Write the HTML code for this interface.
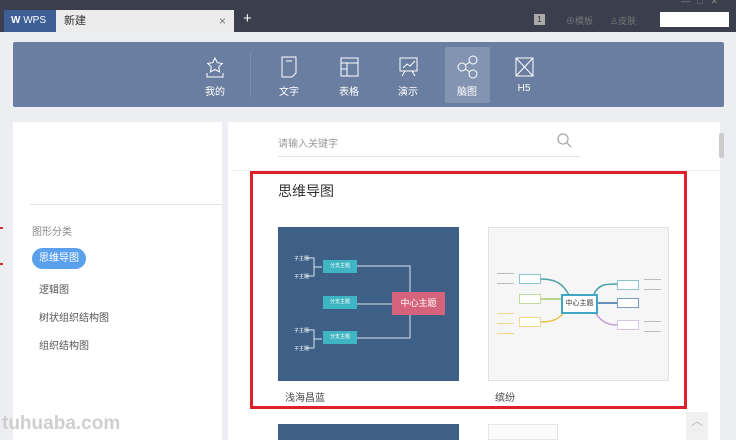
<!DOCTYPE html>
<html><head><meta charset="utf-8"><style>
*{margin:0;padding:0;box-sizing:border-box}
html,body{width:736px;height:440px;overflow:hidden}
body{background:#eceef1;font-family:"Liberation Sans","Noto Sans CJK SC",sans-serif;position:relative}
.abs{position:absolute}
.title{left:0;top:0;width:736px;height:32px;background:#3a3e4d}
.tab1{left:4px;top:10px;width:52px;height:22px;background:#3d5f96;color:#fff;font-size:10px;line-height:22px;padding-left:7px}
.tab2{left:56px;top:10px;width:178px;height:22px;background:#ececec;color:#333;font-size:11px;line-height:22px;padding-left:8px}
.banner{left:13px;top:42px;width:711px;height:65px;background:#6a7ea1;border-radius:2px}
.it{position:absolute;top:0;width:44px;height:65px;color:#fff;font-size:10px;text-align:center}
.it svg{position:absolute;left:12px;top:13px}
.it span{position:absolute;left:0;right:0;top:41px}
.panel{background:#fff}
.pill{left:32px;top:248px;width:54px;height:21px;background:#5aa0ec;border-radius:11px;color:#fff;font-size:10px;line-height:21px;text-align:center}
.cat{left:39px;font-size:10px;color:#555}
.red{left:250px;top:171px;width:437px;height:238px;border:3px solid #e0202a}
.box{position:absolute;font-size:5px;color:#fff;text-align:center}
.b{position:absolute;background:#fff;height:10px;width:22px;border:1px solid}
.s{position:absolute;height:8px;width:17px;border-bottom:1px solid}
</style></head><body>
<div class="abs title"></div>
<div class="abs tab1"><b style="font-size:10px">W</b> WPS</div>
<div class="abs tab2">新建<span style="position:absolute;right:8px;color:#777;font-size:12px">×</span></div>
<div class="abs" style="left:243px;top:10px;color:#fff;font-size:15px">+</div>
<div class="abs" style="left:534px;top:14px;width:11px;height:11px;background:#aaa;color:#333;font-size:8px;text-align:center;line-height:11px">1</div>
<div class="abs" style="left:566px;top:14px;color:#777;font-size:9px">⊕模板</div>
<div class="abs" style="left:610px;top:14px;color:#777;font-size:9px">♙皮肤</div>
<div class="abs" style="left:660px;top:12px;width:69px;height:15px;background:#fff"></div>
<div class="abs" style="left:681px;top:-4px;color:#888;font-size:9px">—&nbsp;&nbsp;&nbsp;□&nbsp;&nbsp;&nbsp;✕</div>

<div class="abs banner">
 <div class="it" style="left:180px"><svg width="20" height="24" viewBox="0 0 20 24" fill="none" stroke="#fff" stroke-width="1"><path d="M10 3l2.3 4.7 5 .7-3.6 3.5.9 5-4.6-2.4-4.6 2.4.9-5L2.7 8.4l5-.7z"/><path d="M2 18v4h16v-4"/></svg><span>我的</span></div>
 <div style="position:absolute;left:237px;top:10px;width:1px;height:45px;background:#7d8fae"></div>
 <div class="it" style="left:254px"><svg width="20" height="24" viewBox="0 0 20 24" fill="none" stroke="#fff"><path d="M3 2h14v16l-4 4H3z M7 6h6"/></svg><span>文字</span></div>
 <div class="it" style="left:314px"><svg width="20" height="24" viewBox="0 0 20 24" fill="none" stroke="#fff"><rect x="2" y="3" width="17" height="18"/><path d="M2 8h17M8 8v13M2 14h6"/></svg><span>表格</span></div>
 <div class="it" style="left:373px"><svg width="20" height="24" viewBox="0 0 20 24" fill="none" stroke="#fff"><path d="M2 3h17v13H2zM5 13l4-4 3 2 5-5M7 16l-3 5M14 16l3 5"/></svg><span>演示</span></div>
 <div style="position:absolute;left:432px;top:5px;width:45px;height:56px;background:#8294b2;border-radius:2px"></div>
 <div class="it" style="left:432px"><svg width="22" height="24" viewBox="0 0 22 24" fill="none" stroke="#fff"><circle cx="5" cy="12" r="4"/><circle cx="16" cy="5" r="4"/><circle cx="16" cy="19" r="4"/><path d="M8 10l5-3M8 14l5 3"/></svg><span>脑图</span></div>
 <div class="it" style="left:489px"><svg width="20" height="24" viewBox="0 0 20 24" fill="none" stroke="#fff"><rect x="2" y="3" width="17" height="18"/><path d="M2 3l17 18M19 3L2 21"/></svg><span>H5</span></div>
</div>

<div class="abs panel" style="left:13px;top:122px;width:209px;height:318px"></div>
<div class="abs" style="left:30px;top:204px;width:192px;height:1px;background:#e3e3e3"></div>
<div class="abs" style="left:32px;top:223px;font-size:10px;color:#888">图形分类</div>
<div class="abs pill">思维导图</div>
<div class="abs cat" style="top:281px">逻辑图</div>
<div class="abs cat" style="top:309px">树状组织结构图</div>
<div class="abs cat" style="top:337px">组织结构图</div>

<div class="abs panel" style="left:228px;top:122px;width:492px;height:318px"></div>
<div class="abs" style="left:278px;top:135px;font-size:10px;color:#999">请输入关键字</div>
<svg class="abs" style="left:556px;top:132px" width="16" height="16" fill="none" stroke="#aaa" stroke-width="1.3"><circle cx="7" cy="7" r="5"/><path d="M11 11l4 4"/></svg>
<div class="abs" style="left:278px;top:156px;width:302px;height:1px;background:#e2e2e2"></div>
<div class="abs" style="left:232px;top:170px;width:488px;height:1px;background:#eee"></div>
<div class="abs" style="left:719px;top:133px;width:5px;height:25px;background:#ccc;border-radius:2px"></div>

<div class="abs red"></div>
<div class="abs" style="left:278px;top:181px;font-size:14px;color:#333">思维导图</div>

<div class="abs" style="left:278px;top:227px;width:181px;height:154px;background:#3e6086">
 <svg width="181" height="154" style="position:absolute;left:0;top:0" fill="none" stroke="#d8e4ee" stroke-width="1">
  <path d="M76 39h56v32M76 77h38M76 111h56V84M132 77h-18M28 31h8v18h-8M36 40h8M28 103h8v18h-8M36 112h8"/>
 </svg>
 <div class="box" style="left:45px;top:33px;width:34px;height:13px;background:#3fb4c3;line-height:13px">分支主题</div>
 <div class="box" style="left:45px;top:69px;width:34px;height:13px;background:#3fb4c3;line-height:13px">分支主题</div>
 <div class="box" style="left:45px;top:104px;width:34px;height:13px;background:#3fb4c3;line-height:13px">分支主题</div>
 <div class="box" style="left:114px;top:65px;width:53px;height:23px;background:#d6637c;line-height:23px;font-size:9px">中心主题</div>
 <div class="box" style="left:16px;top:28px;">子主题</div><div class="box" style="left:16px;top:46px;">子主题</div>
 <div class="box" style="left:16px;top:100px;">子主题</div><div class="box" style="left:16px;top:118px;">子主题</div>
</div>
<div class="abs" style="left:488px;top:227px;width:181px;height:154px;background:#f6f6f6;border:1px solid #e2e2e2">
 <svg width="181" height="154" style="position:absolute;left:0;top:0" fill="none" stroke-width="1.5">
  <path d="M52 51c15 0 22 5 28 16" stroke="#48a0a8"/><path d="M52 71h20" stroke="#a6c86a"/><path d="M52 94c15 0 22-5 28-18" stroke="#e9c24e"/>
  <path d="M105 66c5-10 12-10 23-10" stroke="#48a0a8"/><path d="M109 75h19" stroke="#3a6fa8"/><path d="M105 82c5 10 12 15 23 15" stroke="#c5a0d6"/>
 </svg>
 <div class="box" style="left:72px;top:66px;width:37px;height:20px;border:2px solid #3ea7c4;background:#fff;color:#333;font-size:7px;line-height:16px">中心主题</div>
 <div class="b" style="left:30px;top:46px;border-color:#8cc4cc"></div>
 <div class="b" style="left:30px;top:66px;border-color:#c4dca0"></div>
 <div class="b" style="left:30px;top:89px;border-color:#f0d890"></div>
 <div class="b" style="left:128px;top:52px;border-color:#8cc4cc"></div>
 <div class="b" style="left:128px;top:70px;border-color:#7a9cc4"></div>
 <div class="b" style="left:128px;top:92px;border-color:#d8c4e8"></div>
 <div class="s" style="left:8px;top:38px;border-color:#bbb"></div><div class="s" style="left:8px;top:48px;border-color:#bbb"></div>
 <div class="s" style="left:8px;top:78px;border-color:#f0d890"></div><div class="s" style="left:8px;top:88px;border-color:#f0d890"></div><div class="s" style="left:8px;top:98px;border-color:#f0d890"></div>
 <div class="s" style="left:155px;top:44px;border-color:#bbb"></div><div class="s" style="left:155px;top:54px;border-color:#bbb"></div>
 <div class="s" style="left:155px;top:86px;border-color:#bbb"></div><div class="s" style="left:155px;top:96px;border-color:#bbb"></div>
</div>
<div class="abs" style="left:285px;top:389px;font-size:10px;color:#444">浅海昌蓝</div>
<div class="abs" style="left:495px;top:389px;font-size:10px;color:#444">缤纷</div>

<div class="abs" style="left:278px;top:424px;width:181px;height:16px;background:#3e6086"></div>
<div class="abs" style="left:488px;top:424px;width:70px;height:16px;background:#fbfbfb;border:1px solid #e6e6e6"></div>
<div class="abs" style="left:686px;top:412px;width:22px;height:28px;background:#f0f0f0;color:#bbb;font-size:12px;text-align:center">︿</div>
<div class="abs" style="left:0;top:227px;width:3px;height:2px;background:#c33"></div>
<div class="abs" style="left:0;top:263px;width:3px;height:2px;background:#c33"></div>
<div class="abs" style="left:2px;top:413px;font-size:19px;font-weight:bold;color:#d0d0d0;text-shadow:0 0 1px #fff"></div>
<div class="abs" style="left:2px;top:413px;font-size:19px;font-weight:bold;color:#cfcfcf">tuhuaba.com</div>
</body></html>
